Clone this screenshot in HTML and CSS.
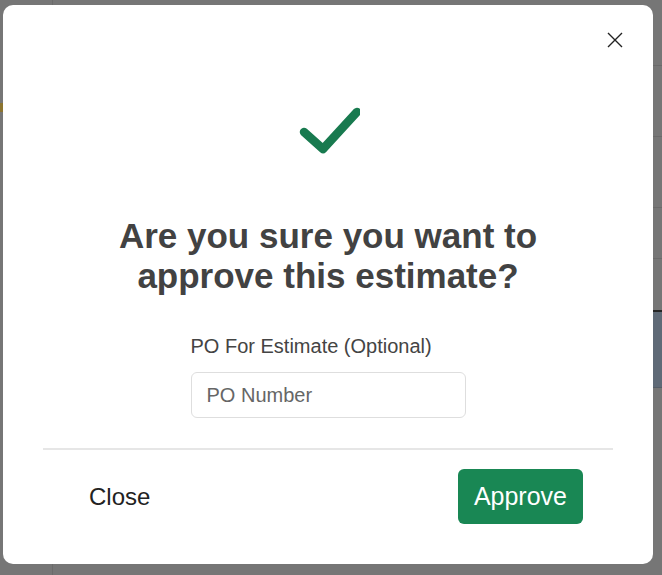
FILE: index.html
```html
<!DOCTYPE html>
<html lang="en">
<head>
<meta charset="utf-8">
<title>Approve estimate</title>
<link rel="stylesheet" href="styles.css">
</head>
<body>
<div class="page">
  <aside class="sidebar">
    <div class="side-top"></div>
    <div class="side-mark"></div>
  </aside>
  <main class="main">
    <div class="main-head"></div>
    <div class="row r1"></div>
    <div class="row r2"></div>
    <div class="row r3"></div>
    <div class="row r4"></div>
    <div class="band"></div>
  </main>
</div>

<div class="overlay">
  <div class="modal" role="dialog" aria-modal="true">
    <div class="modal-head">
      <button class="close-x" type="button" aria-label="Close">
        <svg width="16" height="16" viewBox="0 0 16 16"><path d="M1 1L15 15M15 1L1 15" stroke="#222" stroke-width="1.4" fill="none"/></svg>
      </button>
    </div>
    <div class="modal-body">
      <svg class="check" width="64" height="50" viewBox="0 0 64 50"><path d="M8 28L27 45L61 8" stroke="#187a4f" stroke-width="8.5" stroke-linecap="round" stroke-linejoin="round" fill="none"/></svg>
      <h2 class="title">Are you sure you want to approve this estimate?</h2>
      <label class="label" for="po">PO For Estimate (Optional)</label>
      <input class="input" id="po" type="text" placeholder="PO Number">
    </div>
    <div class="modal-foot">
      <button class="btn-close" type="button">Close</button>
      <button class="btn-approve" type="button">Approve</button>
    </div>
  </div>
</div>
</body>
</html>
```

FILE: styles.css
```css
* { box-sizing: border-box; }
html, body { margin: 0; padding: 0; }
body {
  width: 662px;
  height: 575px;
  overflow: hidden;
  background: #767676;
  font-family: "Liberation Sans", Arial, sans-serif;
}

/* dimmed page underneath */
.page {
  display: flex;
  height: 575px;
}
.sidebar {
  width: 53px;
  border-right: 1px solid #6b6b6b;
  display: flex;
  flex-direction: column;
}
.side-top { height: 103px; }
.side-mark { height: 9px; width: 3px; background: #8c7430; }
.main {
  flex: 1;
  display: flex;
  flex-direction: column;
}
.main-head { height: 66px; border-bottom: 1px solid #6a6a6a; }
.row { border-bottom: 1px solid #6a6a6a; }
.r1 { height: 71px; }
.r2 { height: 71px; }
.r3 { height: 51px; }
.r4 { height: 53px; border-bottom: 2px solid #262626; }
.band { height: 76px; background: #5f6a77; border-bottom: 1px solid #555e68; }

/* dialog */
.overlay {
  position: fixed;
  inset: 0;
  display: flex;
  align-items: flex-start;
  justify-content: flex-start;
  padding: 5px 0 0 3px;
}
.modal {
  width: 650px;
  height: 559px;
  background: #fff;
  border-radius: 10px;
  display: flex;
  flex-direction: column;
}
.modal-head {
  display: flex;
  justify-content: flex-end;
  padding: 27px 30px 0 0;
}
.close-x {
  width: 16px;
  height: 16px;
  padding: 0;
  border: 0;
  background: none;
  display: flex;
}
.modal-body {
  display: flex;
  flex-direction: column;
  align-items: center;
  padding: 0 40px;
}
.check { margin-top: 56px; }
.title {
  margin: 62px 0 0;
  width: 460px;
  text-align: center;
  font-size: 35px;
  line-height: 40px;
  font-weight: 700;
  color: #424242;
}
.label {
  margin-top: 38px;
  font-size: 20px;
  line-height: 24px;
  color: #444;
  width: 275px;
  text-align: left;
}
.input {
  margin-top: 14px;
  width: 275px;
  height: 46px;
  border: 1px solid #dedede;
  border-radius: 6px;
  padding: 0 15px;
  font-family: inherit;
  font-size: 20px;
  color: #333;
  background: #fff;
}
.input::placeholder { color: #666; }
.modal-foot {
  margin: 30px 40px 0;
  border-top: 2px solid #e6e6e6;
  display: flex;
  justify-content: space-between;
  align-items: center;
  padding: 19px 30px 0 30px;
}
.btn-close {
  border: 0;
  background: none;
  font-family: inherit;
  font-size: 24px;
  color: #222;
  padding: 12px 16px;
}
.btn-approve {
  border: 0;
  background: #198754;
  color: #fff;
  font-family: inherit;
  font-size: 25px;
  height: 55px;
  padding: 0 16px;
  border-radius: 6px;
}
```
